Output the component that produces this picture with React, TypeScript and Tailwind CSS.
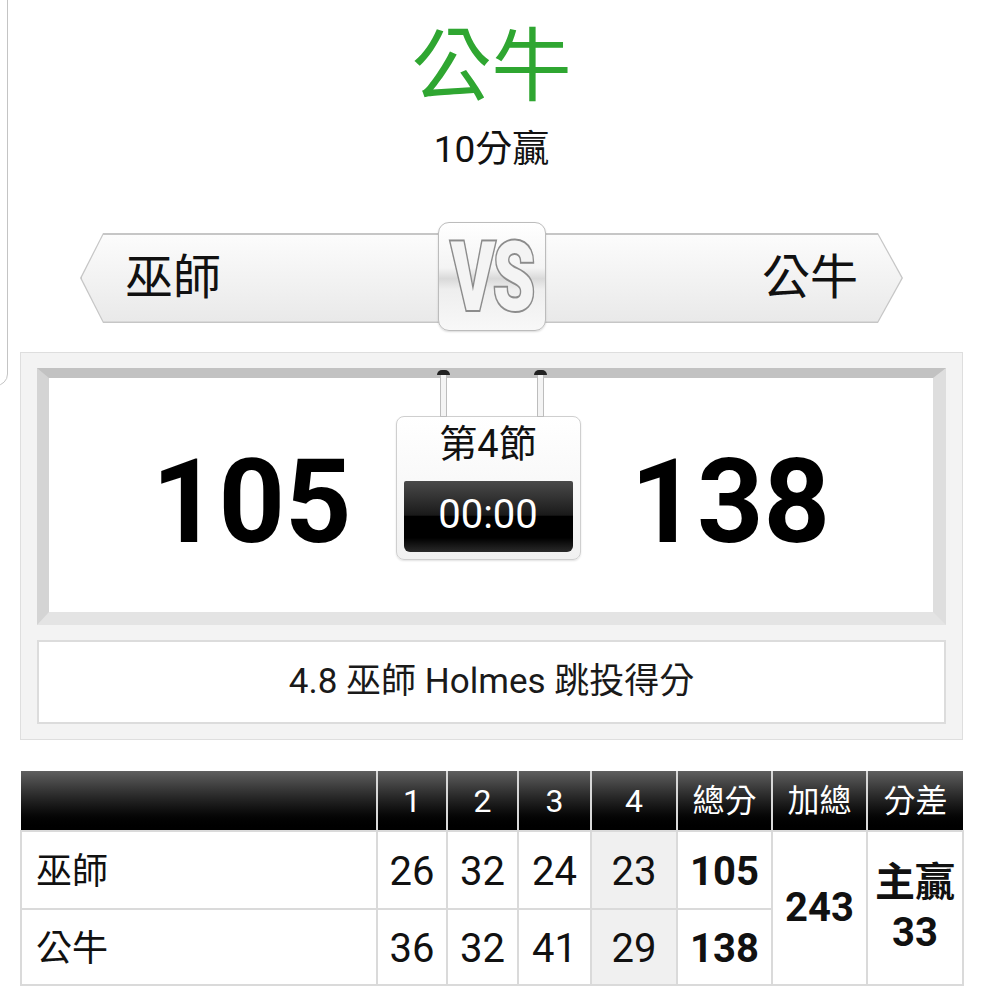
import React from "react";

const FONT = { fontFamily: '"Roboto", "Noto Sans CJK TC", "Noto Sans", sans-serif' };

function VsBar() {
  return (
    <div className="relative mx-[80px] mt-[63px] h-[90px]">
      <div className="absolute inset-0 bg-[#c6c6c6] [clip-path:polygon(0_50%,23px_0,calc(100%-25px)_0,100%_50%,calc(100%-25px)_100%,23px_100%)]" />
      <div className="absolute inset-[1.5px] bg-gradient-to-b from-[#fcfcfc] to-[#e9e9e9] [clip-path:polygon(0_50%,22px_0,calc(100%-24px)_0,100%_50%,calc(100%-24px)_100%,22px_100%)]" />
      <div className="relative flex h-full items-center justify-between px-[45px] text-[48px] leading-none text-[#111]">
        <span>巫師</span>
        <span>公牛</span>
      </div>
      <div className="absolute left-1/2 top-[-11px] flex h-[109px] w-[108px] -translate-x-1/2 items-center justify-center overflow-hidden rounded-[11px] border-[1.5px] border-[#bcbcbc] bg-[linear-gradient(#ffffff_0%,#f4f4f4_42%,#d9d9d9_52%,#eeeeee_62%,#f8f8f8_100%)] shadow-[0_1px_2px_rgba(0,0,0,0.15)]">
        <span className="inline-block scale-x-[0.7] text-[96px] font-black leading-none tracking-[-3px] text-[#f4f4f4] [-webkit-text-stroke:4px_#8c8c8c] [paint-order:stroke_fill]">
          VS
        </span>
      </div>
    </div>
  );
}

function Clock() {
  return (
    <div className="relative mt-[38px] flex h-[144px] w-[185px] flex-col items-center rounded-[8px] border border-[#cfcfcf] bg-gradient-to-b from-[#ffffff] to-[#f1f1f1] shadow-[0_1px_2px_rgba(0,0,0,0.12)]">
      <div className="absolute left-[43px] top-[-45px] h-[45px] w-[7px] border border-[#bdbdbd] bg-[#f4f4f4]" />
      <div className="absolute left-[40px] top-[-47px] h-[5px] w-[13px] rounded-t-full bg-[#222]" />
      <div className="absolute left-[140px] top-[-45px] h-[45px] w-[7px] border border-[#bdbdbd] bg-[#f4f4f4]" />
      <div className="absolute left-[137px] top-[-47px] h-[5px] w-[13px] rounded-t-full bg-[#222]" />
      <div className="mt-[2px] h-[50px] text-[38px] leading-[50px] text-[#111]">第4節</div>
      <div className="mt-[12px] flex h-[71px] w-[169px] items-center justify-center rounded-b-[6px] rounded-t-[2px] bg-[linear-gradient(#4a4a4a_0%,#1a1a1a_48%,#000000_50%,#000000_80%,#2a2a2a_100%)] pb-[3px] text-[40px] leading-none text-white">
        00:00
      </div>
    </div>
  );
}

function Scoreboard() {
  return (
    <div className="mx-[20px] mt-[29px] border border-[#dedede] bg-[#f3f3f3] px-[16px] pb-[15px] pt-[15px]">
      <div className="h-[257px] border-b-[13px] border-l-[12px] border-r-[13px] border-t-[10px] border-b-[#e4e4e4] border-l-[#d4d4d4] border-r-[#dedede] border-t-[#c2c2c2] bg-white">
        <div className="flex h-full items-start justify-center">
          <div className="mr-[44px] mt-[66px] text-[116px] font-bold leading-[116px] text-black">105</div>
          <Clock />
          <div className="ml-[50px] mt-[66px] text-[116px] font-bold leading-[116px] text-black">138</div>
        </div>
      </div>
      <div className="mt-[15px] flex h-[84px] items-center justify-center border-2 border-[#dcdcdc] bg-white text-[35px] text-[#1a1a1a]">
        4.8 巫師 Holmes 跳投得分
      </div>
    </div>
  );
}

function Table() {
  const cols = [356, 70, 71, 73, 86, 95, 95, 96];
  const head = ["", "1", "2", "3", "4", "總分", "加總", "分差"];
  const rows = [
    { name: "巫師", q: ["26", "32", "24", "23"], total: "105" },
    { name: "公牛", q: ["36", "32", "41", "29"], total: "138" },
  ];
  return (
    <div className="mx-[20px] mt-[31px]">
      <table className="w-[942px] table-fixed border-collapse">
        <colgroup>
          {cols.map((w, i) => (
            <col key={i} style={{ width: w }} />
          ))}
        </colgroup>
        <thead>
          <tr className="h-[60px] bg-gradient-to-b from-[#606060] to-[#000000]">
            {head.map((h, i) => (
              <th
                key={i}
                className={`p-0 text-center text-[32px] font-normal text-white ${i > 0 ? "border-l-2 border-[#d8d8d8]" : ""}`}
              >
                {h}
              </th>
            ))}
          </tr>
        </thead>
        <tbody>
          {rows.map((r, ri) => (
            <tr key={ri} className={ri === 0 ? "h-[78px]" : "h-[76px]"}>
              <td className="border-2 border-[#dadada] pl-[14px] pt-[4px] text-[36px] text-[#111]">{r.name}</td>
              {r.q.map((v, qi) => (
                <td
                  key={qi}
                  className={`border-2 border-[#dadada] p-0 pt-[4px] text-center text-[40px] text-[#111] ${qi === 3 ? "bg-[#f0f0f0]" : ""}`}
                >
                  {v}
                </td>
              ))}
              <td className="border-2 border-[#dadada] p-0 pt-[4px] text-center text-[40px] font-bold text-[#111]">{r.total}</td>
              {ri === 0 && (
                <>
                  <td rowSpan={2} className="border-2 border-[#dadada] p-0 text-center text-[40px] font-bold text-[#111]">
                    243
                  </td>
                  <td rowSpan={2} className="border-2 border-[#dadada] p-0 text-center text-[40px] font-bold leading-[50px] text-[#111]">
                    主贏
                    <br />
                    33
                  </td>
                </>
              )}
            </tr>
          ))}
        </tbody>
      </table>
    </div>
  );
}

export default function App() {
  return (
    <div className="relative min-h-[1000px] w-[983px] overflow-hidden bg-white" style={FONT}>
      <div className="absolute left-[-20px] top-[-12px] h-[398px] w-[28px] rounded-[12px] border border-[#c4c4c4]" />
      <div className="mt-[22px] text-center text-[80px] leading-[90px] text-[#2fa631]">公牛</div>
      <div className="mt-[18px] text-center text-[37px] leading-[40px] text-[#111]">10分贏</div>
      <VsBar />
      <Scoreboard />
      <Table />
    </div>
  );
}
